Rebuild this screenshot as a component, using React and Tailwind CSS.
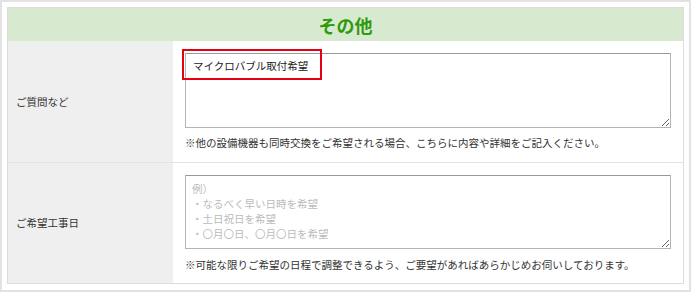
export default function App() {
    const font = { fontFamily: '"Noto Sans CJK JP", "Noto Sans", sans-serif' };

    return (
        <div
            className="w-[691px] h-[292px] bg-white border-2 border-[#e2e2e2] p-[5px] text-[#333]"
            style={font}
        >
            <div className="border border-[#dcdcdc]">

                {/* Header */}
                <div className="h-[33px] bg-[#d7ead0] flex items-center justify-center">
                    <h2 className="text-[18px] font-bold text-[#2f9b0c] leading-none">その他</h2>
                </div>

                {/* Row 1 */}
                <div className="flex h-[121px]">
                    <div className="w-[165px] bg-[#efefef] flex items-center pl-2 text-[10.5px]">
                        ご質問など
                    </div>
                    <div className="flex-1 pl-3 pt-3">
                        <div className="relative w-[486px]">
                            <textarea
                                className="block w-full h-[75px] border border-[#b4b4b4] border-t-[#999] px-[7px] pt-[4px] pb-[5px] text-[10.5px] leading-[15px] text-[#222] outline-none"
                                style={font}
                                defaultValue="マイクロバブル取付希望"
                            />
                            <div className="absolute left-[-3px] top-[-4px] w-[140px] h-[31px] border-2 border-[#e60012] pointer-events-none" />
                        </div>
                        <p className="mt-[7px] text-[10.5px] leading-[15px]">
                            ※他の設備機器も同時交換をご希望される場合、こちらに内容や詳細をご記入ください。
                        </p>
                    </div>
                </div>

                {/* Row 2 */}
                <div className="flex h-[121px] border-t border-[#e4e4e4]">
                    <div className="w-[165px] bg-[#efefef] flex items-center pl-2 text-[10.5px]">
                        ご希望工事日
                    </div>
                    <div className="flex-1 pl-3 pt-3">
                        <textarea
                            className="block w-[486px] h-[74px] border border-[#b4b4b4] border-t-[#999] px-[6px] py-[5px] text-[10.5px] leading-[15px] outline-none placeholder:text-[#bbb]"
                            style={font}
                            placeholder={"例）\n・なるべく早い日時を希望\n・土日祝日を希望\n・〇月〇日、〇月〇日を希望"}
                        />
                        <p className="mt-[8px] text-[10.5px] leading-[15px]">
                            ※可能な限りご希望の日程で調整できるよう、ご要望があればあらかじめお伺いしております。
                        </p>
                    </div>
                </div>

            </div>
        </div>
    );
}
